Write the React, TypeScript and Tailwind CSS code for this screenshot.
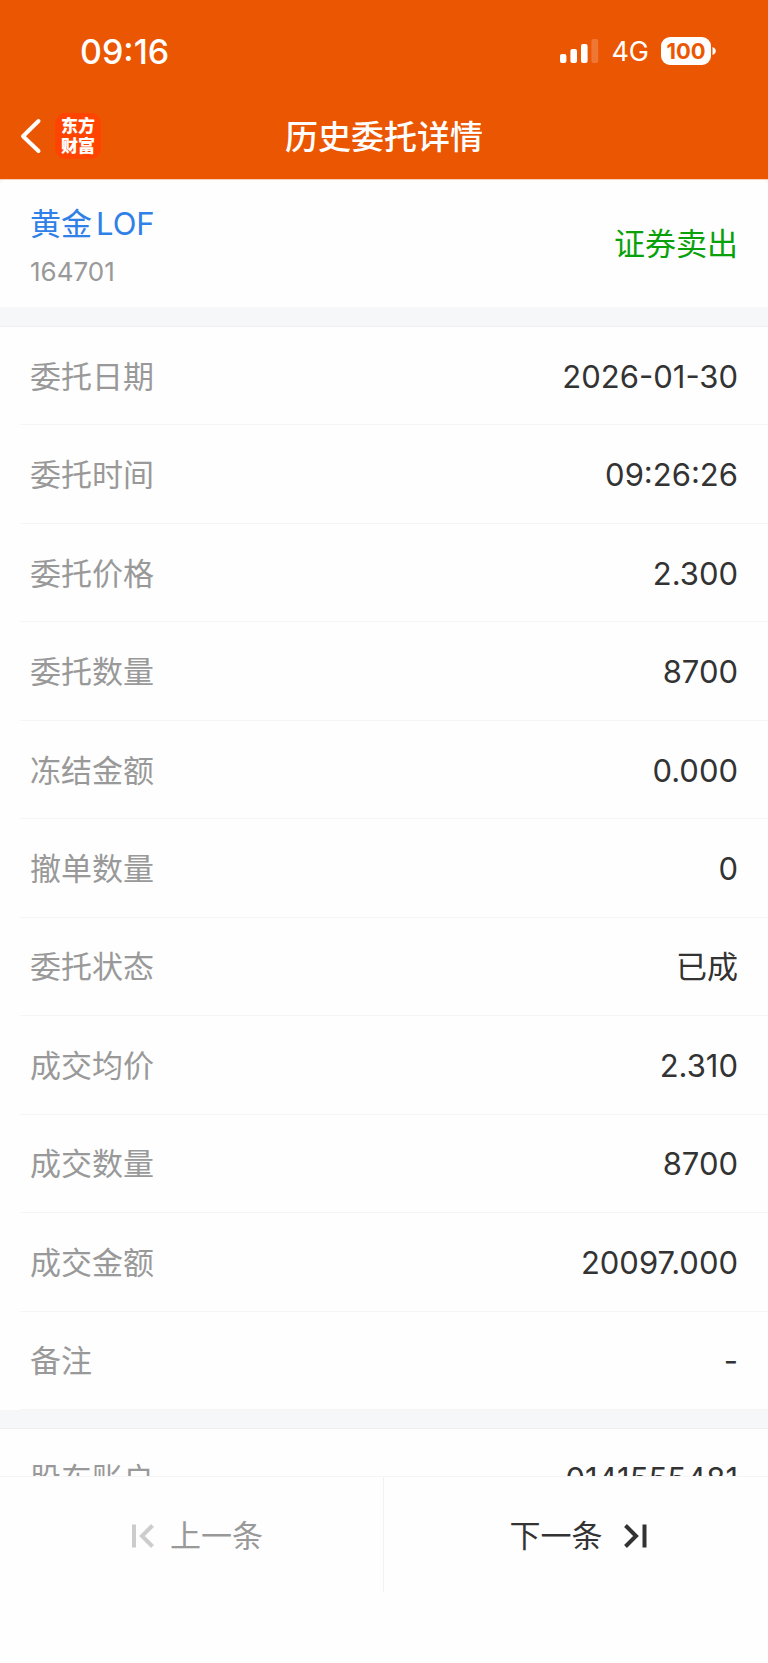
type Detail = {
  label: string;
  value: string;
};

const orderDetails: Detail[] = [
  { label: '委托日期', value: '2026-01-30' },
  { label: '委托时间', value: '09:26:26' },
  { label: '委托价格', value: '2.300' },
  { label: '委托数量', value: '8700' },
  { label: '冻结金额', value: '0.000' },
  { label: '撤单数量', value: '0' },
  { label: '委托状态', value: '已成' },
  { label: '成交均价', value: '2.310' },
  { label: '成交数量', value: '8700' },
  { label: '成交金额', value: '20097.000' },
  { label: '备注', value: '-' },
];

function StatusBar() {
  return (
    <div className="flex h-[102px] items-center justify-between pl-20 pr-[52px] text-white">
      <span className="pt-0.5 text-[34px] leading-10 font-medium">09:16</span>
      <div className="flex items-center">
        <svg width="40" height="26" viewBox="0 0 40 26" fill="currentColor" className="mr-3">
          <rect x="1" y="16" width="6.4" height="9" rx="2" />
          <rect x="11.4" y="11" width="6.6" height="14" rx="2" />
          <rect x="22" y="6" width="6.6" height="19" rx="2" />
          <rect x="32.4" y="1" width="6.8" height="24" rx="2" opacity="0.2" />
        </svg>
        <span className="mr-3 pt-0.5 text-[27px] leading-8">4G</span>
        <div className="flex items-center">
          <span className="flex h-7 w-[50px] items-center justify-center rounded-[9px] bg-white text-[22px] leading-7 font-bold text-[#eb5602]">
            100
          </span>
          <svg width="5" height="8" viewBox="0 0 5 8" fill="currentColor">
            <path d="M1.5 0C3.6 .7 4.8 2.2 4.8 4S3.6 7.3 1.5 8Z" />
          </svg>
        </div>
      </div>
    </div>
  );
}

function NavBar() {
  return (
    <div className="grid h-[77px] grid-cols-[1fr_auto_1fr] items-center px-5 pb-[9px] text-white">
      <div className="flex items-center gap-[13px]">
        <button type="button" aria-label="返回">
          <svg width="22" height="36" viewBox="0 0 22 36" fill="none" stroke="currentColor" strokeWidth="4" strokeLinecap="round" strokeLinejoin="round">
            <path d="M18.5 3 3 18.2 18.5 33" />
          </svg>
        </button>
        <div className="flex size-[46px] flex-col items-center justify-center rounded-[10px] bg-[#ff4400] text-[17px] leading-5 font-black">
          <span>东方</span>
          <span>财富</span>
        </div>
      </div>
      <h1 className="pt-0.5 text-[33px] leading-10 font-medium">历史委托详情</h1>
    </div>
  );
}

function DetailRow({ label, value }: Detail) {
  return (
    <div className="ml-5 flex min-h-[98px] items-center justify-between border-b border-[#f5f5f5] pt-0.5 pr-[30px] pl-[10px]">
      <dt className="text-[#999999]">{label}</dt>
      <dd className="text-[#333333]">{value}</dd>
    </div>
  );
}

export default function App() {
  return (
    <div className="flex h-screen flex-col overflow-hidden bg-[#fefefe] font-['Inter','Noto_Sans_CJK_SC',sans-serif] text-[31px] leading-10">
      <header className="shrink-0 border-b border-[#f9cfb5] bg-[#eb5602]">
        <StatusBar />
        <NavBar />
      </header>

      <main className="min-h-0 flex-1 overflow-hidden bg-[#f5f7f9]">
        <section className="flex h-[127px] items-center justify-between rounded-t-md bg-[#fefefe] px-[30px]">
          <div className="pt-1">
            <h2>
              <a href="#quote" className="flex gap-1 text-[#2f80e7]">
                <span>黄金</span>
                <span>LOF</span>
              </a>
            </h2>
            <p className="mt-3 text-[26px] leading-8 text-[#999999]">164701</p>
          </div>
          <span className="text-[#09a109]">证券卖出</span>
        </section>

        <dl className="mt-[19px] grid min-h-[1084px] auto-rows-fr border-t border-[#f0f0f2] bg-[#fefefe]">
          {orderDetails.map((item) => (
            <DetailRow key={item.label} {...item} />
          ))}
        </dl>

        <dl className="mt-[18px] border-t border-[#f0f0f2] bg-[#fefefe]">
          <DetailRow label="股东账户" value="0141555481" />
        </dl>
      </main>

      <footer className="shrink-0 border-t border-[#f5f5f5] pb-[71px]">
        <div className="grid h-[115px] grid-cols-2 divide-x divide-[#f2f2f2]">
          <button type="button" disabled className="flex items-center justify-center gap-4 pt-0.5 pl-3 text-[#999999]">
            <svg width="22" height="24" viewBox="0 0 22 24" fill="none" stroke="#cccccc" strokeWidth="4">
              <path d="M2 .5v23M20.5 1.5 10 12l10.500 10.500" />
            </svg>
            上一条
          </button>
          <button type="button" className="flex items-center justify-center gap-5 pt-0.5 pl-1 text-[#333333]">
            下一条
            <svg width="24" height="24" viewBox="0 0 24 24" fill="none" stroke="currentColor" strokeWidth="4">
              <path d="M2.500 1.500 13 12 2.500 22.500M21.500 .5v23" />
            </svg>
          </button>
        </div>
      </footer>
    </div>
  );
}
